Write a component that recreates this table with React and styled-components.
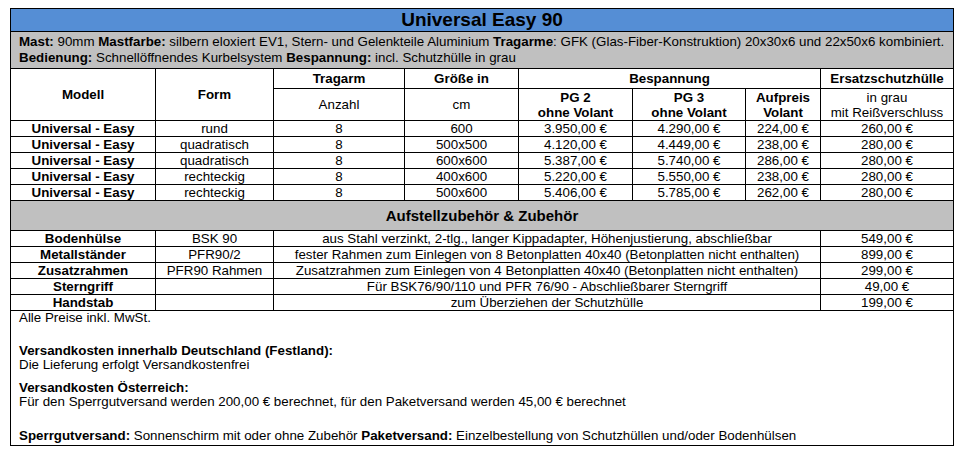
import styled, { createGlobalStyle } from "styled-components";

const Global = createGlobalStyle`
  html, body {
    margin: 0;
    padding: 0;
    background: #ffffff;
  }
  body {
    font-family: "Liberation Sans", Arial, sans-serif;
    color: #000;
  }
`;

const Page = styled.div`
  padding: 8px 0 0 10px;
`;

const Sheet = styled.table`
  width: 944px;
  table-layout: fixed;
  border-collapse: collapse;
  font-size: 13.33px;
  line-height: 15px;
`;

const Cell = styled.td`
  border: 1px solid #000;
  padding: 0 2px;
  text-align: ${(p) => p.$align || "center"};
  font-weight: ${(p) => (p.$bold ? 700 : 400)};
  white-space: nowrap;
  overflow: hidden;
  vertical-align: middle;
`;

const TitleCell = styled.td`
  border: 1px solid #000;
  background: #558ed5;
  text-align: center;
  font-size: 19px;
  font-weight: 700;
  line-height: 22px;
  padding: 0;
`;

const InfoCell = styled.td`
  border: 1px solid #000;
  background: #c0c0c0;
  padding: 2px 8px 2px 8px;
  line-height: 16px;
  text-align: left;
  white-space: nowrap;
`;

const SectionCell = styled.td`
  border: 1px solid #000;
  background: #c0c0c0;
  text-align: center;
  font-size: 15px;
  font-weight: 700;
  padding: 0;
`;

const NotesCell = styled.td`
  border: 1px solid #000;
  padding: 0 8px 2px 8px;
  vertical-align: top;
`;

const Note = styled.p`
  margin: ${(p) => p.$space || 0}px 0 0 0;
  line-height: 14px;
  white-space: nowrap;
`;

const Row = styled.tr`
  height: ${(p) => p.$h}px;
`;

const cols = [145, 118, 131, 114, 114, 113, 75, 133];

const models = [
  ["rund", "600", "3.950,00 €", "4.290,00 €", "224,00 €", "260,00 €"],
  ["quadratisch", "500x500", "4.120,00 €", "4.449,00 €", "238,00 €", "280,00 €"],
  ["quadratisch", "600x600", "5.387,00 €", "5.740,00 €", "286,00 €", "280,00 €"],
  ["rechteckig", "400x600", "5.220,00 €", "5.550,00 €", "238,00 €", "280,00 €"],
  ["rechteckig", "500x600", "5.406,00 €", "5.785,00 €", "262,00 €", "280,00 €"],
];

const extras = [
  ["Bodenhülse", "BSK 90", "aus Stahl verzinkt, 2-tlg., langer Kippadapter, Höhenjustierung, abschließbar", "549,00 €"],
  ["Metallständer", "PFR90/2", "fester Rahmen zum Einlegen von 8 Betonplatten 40x40 (Betonplatten nicht enthalten)", "899,00 €"],
  ["Zusatzrahmen", "PFR90 Rahmen", "Zusatzrahmen zum Einlegen von 4 Betonplatten 40x40 (Betonplatten nicht enthalten)", "299,00 €"],
  ["Sterngriff", "", "Für BSK76/90/110 und PFR 76/90 - Abschließbarer Sterngriff", "49,00 €"],
  ["Handstab", "", "zum Überziehen der Schutzhülle", "199,00 €"],
];

export default function App() {
  return (
    <Page>
      <Global />
      <Sheet>
        <colgroup>
          {cols.map((w, i) => (
            <col key={i} style={{ width: w }} />
          ))}
        </colgroup>
        <tbody>
          <Row $h={23}>
            <TitleCell colSpan={8}>Universal Easy 90</TitleCell>
          </Row>
          <Row $h={37}>
            <InfoCell colSpan={8}>
              <b>Mast:</b> 90mm <b>Mastfarbe:</b> silbern eloxiert EV1, Stern- und Gelenkteile Aluminium{" "}
              <b>Tragarme</b>: GFK (Glas-Fiber-Konstruktion) 20x30x6 und 22x50x6 kombiniert.
              <br />
              <b>Bedienung:</b> Schnellöffnendes Kurbelsystem <b>Bespannung:</b> incl. Schutzhülle in grau
            </InfoCell>
          </Row>
          <Row $h={20}>
            <Cell $bold rowSpan={2}>Modell</Cell>
            <Cell $bold rowSpan={2}>Form</Cell>
            <Cell $bold>Tragarm</Cell>
            <Cell $bold>Größe in</Cell>
            <Cell $bold colSpan={3}>Bespannung</Cell>
            <Cell $bold>Ersatzschutzhülle</Cell>
          </Row>
          <Row $h={32}>
            <Cell>Anzahl</Cell>
            <Cell>cm</Cell>
            <Cell $bold>PG 2<br />ohne Volant</Cell>
            <Cell $bold>PG 3<br />ohne Volant</Cell>
            <Cell $bold>Aufpreis<br />Volant</Cell>
            <Cell>in grau<br />mit Reißverschluss</Cell>
          </Row>
          {models.map(([form, size, pg2, pg3, vol, cover], i) => (
            <Row $h={16} key={i}>
              <Cell $bold>Universal - Easy</Cell>
              <Cell>{form}</Cell>
              <Cell>8</Cell>
              <Cell>{size}</Cell>
              <Cell>{pg2}</Cell>
              <Cell>{pg3}</Cell>
              <Cell>{vol}</Cell>
              <Cell>{cover}</Cell>
            </Row>
          ))}
          <Row $h={30}>
            <SectionCell colSpan={8}>Aufstellzubehör &amp; Zubehör</SectionCell>
          </Row>
          {extras.map(([name, code, desc, price]) => (
            <Row $h={16} key={name}>
              <Cell $bold>{name}</Cell>
              <Cell>{code}</Cell>
              <Cell colSpan={5}>{desc}</Cell>
              <Cell>{price}</Cell>
            </Row>
          ))}
          <Row $h={133}>
            <NotesCell colSpan={8}>
              <Note>Alle Preise inkl. MwSt.</Note>
              <Note $space={19}>
                <b>Versandkosten innerhalb Deutschland (Festland):</b>
              </Note>
              <Note>Die Lieferung erfolgt Versandkostenfrei</Note>
              <Note $space={9}>
                <b>Versandkosten Österreich:</b>
              </Note>
              <Note>
                Für den Sperrgutversand werden 200,00 € berechnet, für den Paketversand werden 45,00 € berechnet
              </Note>
              <Note $space={20}>
                <b>Sperrgutversand:</b> Sonnenschirm mit oder ohne Zubehör <b>Paketversand:</b> Einzelbestellung
                von Schutzhüllen und/oder Bodenhülsen
              </Note>
            </NotesCell>
          </Row>
        </tbody>
      </Sheet>
    </Page>
  );
}
